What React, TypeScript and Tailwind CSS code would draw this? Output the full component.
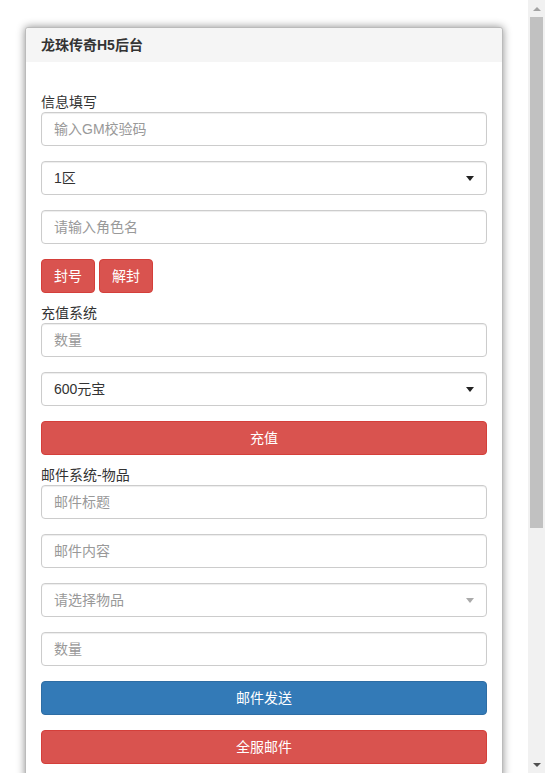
import React from "react";

const font = { fontFamily: '"Liberation Sans", "Noto Sans CJK SC", sans-serif' };

const Field = ({ placeholder }: { placeholder: string }) => (
	<input
		type="text"
		placeholder={placeholder}
		className="block w-full h-[34px] px-3 text-sm text-[#555] border border-[#ccc] rounded bg-white shadow-[inset_0_1px_1px_rgba(0,0,0,0.075)] placeholder:text-[#999] outline-none mb-[15px]"
	/>
);

const Select = ({ value, muted }: { value: string; muted?: boolean }) => (
	<div className="flex items-center justify-between w-full h-[34px] pl-3 pr-[12px] text-sm border border-[#ccc] rounded bg-white shadow-[inset_0_1px_1px_rgba(0,0,0,0.075)] mb-[15px]">
		<span className={muted ? "text-[#999]" : "text-[#333]"}>{value}</span>
		<span
			className={`w-0 h-0 border-x-[4px] border-x-transparent border-t-[5px] ${
				muted ? "border-t-[#aaa]" : "border-t-[#222]"
			}`}
		/>
	</div>
);

const Label = ({ children }: { children: React.ReactNode }) => (
	<div className="h-5 leading-5 text-sm text-[#333]">{children}</div>
);

const WideButton = ({ children, blue, last }: { children: React.ReactNode; blue?: boolean; last?: boolean }) => (
	<button
		className={`block w-full h-[34px] text-sm text-white rounded border ${last ? "mb-[10px]" : "mb-[15px]"} ${
			blue ? "bg-[#337ab7] border-[#2e6da4]" : "bg-[#d9534f] border-[#d43f3a]"
		}`}
	>
		{children}
	</button>
);

const Scrollbar = () => (
	<div className="w-[17px] shrink-0 bg-[#f1f1f1] flex flex-col">
		<div className="h-[17px] flex items-center justify-center">
			<span className="w-0 h-0 border-x-[4px] border-x-transparent border-b-[4px] border-b-[#a3a3a3]" />
		</div>
		<div className="h-[511px] mx-[2px] bg-[#c1c1c1]" />
		<div className="flex-1" />
		<div className="h-[17px] flex items-center justify-center">
			<span className="w-0 h-0 border-x-[4px] border-x-transparent border-t-[4px] border-t-[#505050]" />
		</div>
	</div>
);

export default function App() {
	return (
		<div className="flex h-[773px] overflow-hidden bg-white" style={font}>
			<div className="flex-1 pt-[27px] pl-[25px]">
				<div className="w-[478px] bg-white border border-[#bbb] rounded-[3px] shadow-[0_0_8px_rgba(0,0,0,0.45)]">
					<div className="h-[34px] px-[15px] flex items-center bg-[#f5f5f5] text-sm font-bold text-[#333] rounded-t-[3px]">
						龙珠传奇H5后台
					</div>
					<div className="px-[15px] pt-[30px]">
						<Label>信息填写</Label>
						<Field placeholder="输入GM校验码" />
						<Select value="1区" />
						<Field placeholder="请输入角色名" />
						<div className="flex gap-1 mb-[10px]">
							<button className="w-[54px] h-[34px] text-sm text-white bg-[#d9534f] border border-[#d43f3a] rounded">
								封号
							</button>
							<button className="w-[54px] h-[34px] text-sm text-white bg-[#d9534f] border border-[#d43f3a] rounded">
								解封
							</button>
						</div>
						<Label>充值系统</Label>
						<Field placeholder="数量" />
						<Select value="600元宝" />
						<WideButton last>充值</WideButton>
						<Label>邮件系统-物品</Label>
						<Field placeholder="邮件标题" />
						<Field placeholder="邮件内容" />
						<Select value="请选择物品" muted />
						<Field placeholder="数量" />
						<WideButton blue>邮件发送</WideButton>
						<WideButton>全服邮件</WideButton>
					</div>
				</div>
			</div>
			<Scrollbar />
		</div>
	);
}
